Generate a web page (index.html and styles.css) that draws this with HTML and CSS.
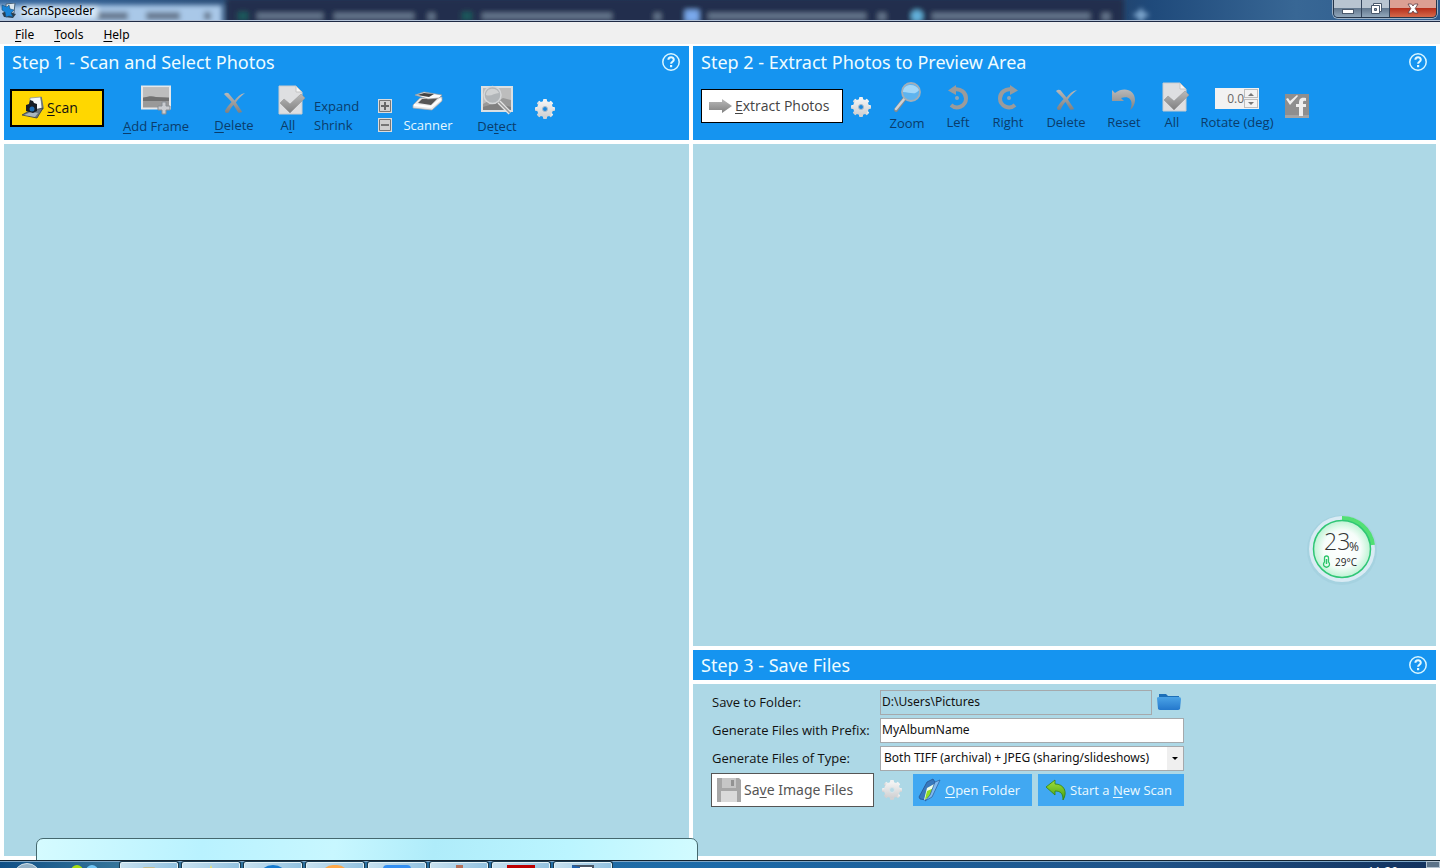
FILE: index.html
```html
<!DOCTYPE html>
<html lang="en">
<head>
<meta charset="utf-8">
<title>ScanSpeeder</title>
<link rel="stylesheet" href="styles.css">
</head>
<body>
<svg class="defs" width="0" height="0" aria-hidden="true">
  <defs>
    <linearGradient id="silver" x1="0" y1="0" x2="0" y2="1"><stop offset="0" stop-color="#f4f4f4"/><stop offset="1" stop-color="#cfd0d2"/></linearGradient>
    <linearGradient id="grey" x1="0" y1="0" x2="0" y2="1"><stop offset="0" stop-color="#b9b9b9"/><stop offset="1" stop-color="#808080"/></linearGradient>
    <linearGradient id="leaf" x1="0" y1="0" x2="0" y2="1"><stop offset="0" stop-color="#a4e03a"/><stop offset="1" stop-color="#3f9d12"/></linearGradient>
    <linearGradient id="folder" x1="0" y1="0" x2="0" y2="1"><stop offset="0" stop-color="#4ba3e6"/><stop offset="1" stop-color="#2478cc"/></linearGradient>
    <radialGradient id="dial"><stop offset="0" stop-color="#ffffff"/><stop offset=".65" stop-color="#f6fdfa"/><stop offset="1" stop-color="#bdf3d3"/></radialGradient>
    <filter id="soft" x="-20%" y="-60%" width="140%" height="220%"><feGaussianBlur stdDeviation="2.4"/></filter>
    <symbol id="gear" viewBox="0 0 22 22">
      <g fill="url(#silver)"><g id="teeth"><rect x="9" y="1" width="4" height="20" rx="1"/><rect x="1" y="9" width="20" height="4" rx="1"/></g><use href="#teeth" transform="rotate(45 11 11)"/></g>
      <path fill="url(#silver)" d="M11 3a8 8 0 1 0 0 16a8 8 0 0 0 0-16z"/>
    </symbol>
    <symbol id="help" viewBox="0 0 20 20"><circle cx="10" cy="10" r="8.2" fill="none" stroke="#d9f6ff" stroke-width="1.5"/><path d="M7.4 7.8c0-3.4 5.4-3.4 5.4 0 0 2-2.7 2-2.700 4" fill="none" stroke="#e4f9ff" stroke-width="2"/><rect x="9" y="13" width="2.2" height="2.2" fill="#e4f9ff"/></symbol>
    <symbol id="cross" viewBox="0 0 24 24"><path fill="url(#grey)" d="M1 3c3-2 5-1 6 1l5 6c3-4 6-7 11-8-4 3-7 6-9.500 10 2 3 4 6 6.500 10-3 1-4 1-5-1l-4-6.500c-2 2-4 5-5 8-2 1-4 0-4-2 2-3 4-6 7-9C7 9 4 6 1 3z"/></symbol>
    <symbol id="check" viewBox="0 0 28 30"><path fill="#dedfe1" stroke="#c9cbce" d="M1 1h17l6 6v22H1z"/><path fill="#f6f6f6" stroke="#c4c4c4" d="M18 1v6h6z"/><path fill="url(#grey)" stroke="#999" stroke-width=".6" d="M2 18l4-4 6 5L23 9l4 4-15 15z"/></symbol>
    <symbol id="turn" viewBox="0 0 24 26"><path d="M8 5.500C15 4 20 9 20 14.500A9 9 0 0 1 5 21" fill="none" stroke="#9b9b9b" stroke-width="4"/><path d="M2 6.500L10 1v10z" fill="#9b9b9b"/><circle cx="11" cy="14" r="2" fill="#8fa4b4"/></symbol>
  </defs>
</svg>

<header class="titlebar">
  <svg class="backdrop" aria-hidden="true" width="1440" height="22">
    <g filter="url(#soft)">
      <rect x="-8" y="5" width="230" height="24" fill="#a9c8e8"/>
      <rect x="226" y="-2" width="898" height="32" fill="#222d4d"/>
      <g fill="#66788f">
        <rect x="96" y="12" width="32" height="8"/><rect x="146" y="12" width="34" height="8"/><rect x="204" y="12" width="7" height="8"/>
        <rect x="257" y="13" width="66" height="6"/><rect x="334" y="13" width="80" height="6"/><rect x="428" y="13" width="7" height="7"/>
        <rect x="482" y="13" width="130" height="6"/><rect x="654" y="13" width="7" height="7"/>
        <rect x="708" y="13" width="158" height="6"/><rect x="878" y="13" width="8" height="7"/>
        <rect x="932" y="13" width="158" height="6"/><rect x="1102" y="13" width="8" height="7"/>
      </g>
      <rect x="238" y="12" width="10" height="8" fill="#1c5a5c"/><rect x="462" y="12" width="10" height="8" fill="#1c5a5c"/>
      <rect x="685" y="10" width="14" height="12" fill="#79a9ec"/><circle cx="917" cy="16" r="6" fill="#64b2dc"/>
      <path d="M1141 9v13M1134 15h14" stroke="#86afd5" stroke-width="4"/>
      <rect x="22" y="5" width="76" height="13" fill="#d5e7f7"/>
    </g>
  </svg>
  <svg class="app-icon" viewBox="0 0 16 16" width="16" height="16" aria-hidden="true"><path d="M5 1l9-1-1 10-8 1z" fill="#dbe6ee" stroke="#49637a"/><path d="M1 10l5-2 9 3-3 4-9-1z" fill="#2d3e4c"/><path d="M1 2l5 2 2-2 1 4 4 1-3 3 2 4-4-1-3 1-1-5-3-2z" fill="#1784d8" stroke="#174d79" stroke-width=".6"/></svg>
  <span class="app-name">ScanSpeeder</span>
  <div class="window-buttons">
    <button class="win" aria-label="Minimize"><svg width="14" height="14" viewBox="0 0 14 14"><rect x="1.500" y="7.500" width="11" height="4" fill="#fff" stroke="#4a596c"/></svg></button>
    <button class="win" aria-label="Restore"><svg width="14" height="14" viewBox="0 0 14 14"><path d="M4.500 1.500h8v8h-8z" fill="#fff" stroke="#4a596c"/><path d="M2.500 3.500h8v8h-8z" fill="#fff" stroke="#4a596c"/><path d="M5.500 6.500h2v2h-2z" fill="#8da0b3" stroke="#4a596c"/></svg></button>
    <button class="win win-close" aria-label="Close"><svg width="14" height="14" viewBox="0 0 14 14"><path d="M2 2h3.500L7 4l1.500-2H12L9.200 6.500 12 11H8.500L7 9l-1.500 2H2l2.800-4.500z" fill="#fff" stroke="#5b3c45" stroke-width=".8"/></svg></button>
  </div>
</header>

<nav class="menubar">
  <button class="menu"><u>F</u>ile</button>
  <button class="menu"><u>T</u>ools</button>
  <button class="menu"><u>H</u>elp</button>
</nav>

<main class="workspace">
  <section class="column">
    <div class="panel-head">
      <div class="title-row"><h2>Step 1 - Scan and Select Photos</h2><button class="help" aria-label="Help"><svg width="20" height="20"><use href="#help"/></svg></button></div>
      <div class="toolbar toolbar-scan">
        <button class="action scan"><svg width="24" height="24" viewBox="0 0 24 24" aria-hidden="true"><path d="M9 2l11-1 1 13-4 3-8-3z" fill="#f4f8fb" stroke="#8b949b" stroke-width=".8"/><path d="M20 1l2 11-5 6" fill="none" stroke="#69747c" stroke-width="1.500"/><path d="M1 19l7-4 14-3-6 10z" fill="#69747c" stroke="#38414a" stroke-width=".8"/><path d="M3 19l7-3 7 1-3 4z" fill="#aab6be"/><path d="M5 9l3-1 1-4 3 1 1 2 3 1v7l-4 2-7-2z" fill="#151c25"/><circle cx="11" cy="13" r="2.500" fill="#1e6db4"/></svg><span><u>S</u>can</span></button>
        <button class="tool w90"><svg width="32" height="32" viewBox="0 0 32 32" aria-hidden="true"><rect x="2" y="1.500" width="28" height="22" fill="#999" stroke="#e4e7ea" stroke-width="2"/><path d="M3 3h26v9H3z" fill="#bdbdbd"/><path d="M3 13c6-2 9-2 13-1l13 1v3H3z" fill="#717171"/><path d="M22 17h4v4h4v4h-4v4h-4v-4h-4v-4h4z" fill="#c9ccd0" stroke="#878d93"/></svg><span><u>A</u>dd Frame</span></button>
        <button class="tool w66"><svg class="low" width="23" height="23"><use href="#cross"/></svg><span><u>D</u>elete</span></button>
        <button class="tool w42"><svg class="nudge" width="28" height="30"><use href="#check"/></svg><span>A<u>l</u>l</span></button>
        <div class="resize">
          <span id="expand">Expand</span><button class="step" aria-labelledby="expand"><svg width="14" height="14" viewBox="0 0 14 14"><path d="M0 0h14v14H0z" fill="#dcdcdc"/><path d="M1.500 1.500h11v11h-11z" fill="#d0d0d0" stroke="#777"/><path d="M7 3v8M3 7h8" stroke="#666" stroke-width="2"/></svg></button>
          <span id="shrink">Shrink</span><button class="step" aria-labelledby="shrink"><svg width="14" height="14" viewBox="0 0 14 14"><path d="M0 0h14v14H0z" fill="#dcdcdc"/><path d="M1.500 1.500h11v11h-11z" fill="#d0d0d0" stroke="#777"/><path d="M3 7h8" stroke="#777" stroke-width="2"/></svg></button>
        </div>
        <button class="tool w72 enabled"><svg class="low" width="32" height="22" viewBox="0 0 32 22" aria-hidden="true"><path d="M1 14l7-7 22-1v4l-10 9L1 17z" fill="#e9e9e9" stroke="#a9a9a9" stroke-width=".7"/><path d="M6 12l4-4 16-1-7 7z" fill="#555"/><path d="M2 14l17 2 10-8" fill="none" stroke="#fff" stroke-width="2"/><path d="M3 4l9-3 18 3-3 3-11 1z" fill="#fbfbfb" stroke="#999" stroke-width=".7"/><path d="M5 4l7-2 10 1-5 3z" fill="#444"/></svg><span>Scanner</span></button>
        <button class="tool w66"><svg width="34" height="32" viewBox="0 0 34 32" aria-hidden="true"><rect x="2" y="2" width="30" height="24" fill="#999" stroke="#dce0e2" stroke-width="2"/><path d="M3 3h28v12l-8-2-7 4-6-2-7 4z" fill="#bdbdbd"/><path d="M3 22l13-4 15 4v3H3z" fill="#808080"/><path d="M19 17l11 11" stroke="#e5e5e5" stroke-width="4"/><path d="M19 17l11 11" stroke="#999" stroke-width="1.500"/><circle cx="12.500" cy="10" r="8.500" fill="#b1b5b8" stroke="#d5d7d9" stroke-width="1.500"/><path d="M6 10c0-8 11-8 13-2-5 0-8 4-13 2z" fill="#d0d2d3"/></svg><span>De<u>t</u>ect</span></button>
        <button class="gear gear-left" aria-label="Scan options"><svg width="22" height="22"><use href="#gear"/><circle class="hub" cx="11" cy="11" r="2.500"/></svg></button>
      </div>
    </div>
    <div class="canvas"></div>
  </section>

  <section class="column">
    <div class="panel-head">
      <div class="title-row"><h2>Step 2 - Extract Photos to Preview Area</h2><button class="help" aria-label="Help"><svg width="20" height="20"><use href="#help"/></svg></button></div>
      <div class="toolbar toolbar-extract">
        <button class="action extract"><svg width="24" height="16" viewBox="0 0 24 16" aria-hidden="true"><path d="M0 4h13V1l10 7-10 7v-3H0z" fill="url(#grey)"/></svg><span><u>E</u>xtract Photos</span></button>
        <button class="gear gear-right" aria-label="Extract options"><svg width="22" height="22"><use href="#gear"/><circle class="hub" cx="11" cy="11" r="2.500"/></svg></button>
        <button class="tool w52"><svg width="30" height="32" viewBox="0 0 30 32" aria-hidden="true"><path d="M4 28l9-12" stroke="#858b90" stroke-width="4" stroke-linecap="round"/><path d="M4 27l9-11" stroke="#ced2d5" stroke-width="2.500" stroke-linecap="round"/><circle cx="19" cy="10" r="9" fill="#5eb4ef" stroke="#a3afb8" stroke-width="1.800"/><path d="M11 10c0-9 13-9 16-2-4 6-9 2-16 2z" fill="#a3d8f9"/></svg><span>Zoom</span></button>
        <button class="tool w50"><svg class="turn" width="24" height="26"><use href="#turn"/></svg><span>Left</span></button>
        <button class="tool w50"><svg class="turn flip" width="24" height="26"><use href="#turn"/></svg><span>Right</span></button>
        <button class="tool w66"><svg class="low" width="23" height="23"><use href="#cross"/></svg><span>Delete</span></button>
        <button class="tool w50"><svg class="low" width="24" height="22" viewBox="0 0 24 22" aria-hidden="true"><path d="M0 2l3 3C12-2 23 2 23 12c0 4-2 8-5 10 4-9 0-15-9-12l3 3H0z" fill="url(#grey)"/></svg><span>Reset</span></button>
        <button class="tool w46"><svg class="nudge" width="28" height="30"><use href="#check"/></svg><span>All</span></button>
        <div class="rotate">
          <div class="spinner"><input id="rotate" type="text" value="0.0"><div class="spin-buttons"><button aria-label="Increase"><svg width="6" height="4"><path d="M0 4l3-3 3 3z"/></svg></button><button aria-label="Decrease"><svg width="6" height="4"><path d="M0 0l3 3 3-3z"/></svg></button></div></div>
          <label for="rotate">Rotate (deg)</label>
        </div>
        <button class="share" aria-label="Share to Facebook"><svg width="24" height="24" viewBox="0 0 24 24"><rect width="24" height="24" fill="#8e8e8e"/><path d="M0 21h24v3H0z" fill="#a3a3a3"/><path d="M21 4v3c-3-1-3 0-3 3h3v3h-3v9h-4v-9h-3v-3h3c0-5 1-7 7-6z" fill="#eee"/><path d="M1 5l2-1 2 3 7-6 1 1-8 9z" fill="#eee"/></svg></button>
      </div>
    </div>
    <div class="canvas preview">
      <svg class="gauge" width="76" height="76" viewBox="0 0 76 76" role="img" aria-label="Memory 23%, 29°C">
        <circle cx="38" cy="39" r="35" fill="#8fbfd0" opacity=".25"/>
        <circle cx="38" cy="38" r="33" fill="#d9ebf4"/>
        <path d="M38 7.500A30.500 30.500 0 0 1 68.500 34" fill="none" stroke="#52df75" stroke-width="5"/>
        <circle cx="38" cy="38" r="28.500" fill="url(#dial)" stroke="#2fc675" stroke-width="1.500"/>
        <text class="g-num" x="20" y="39">23</text><text class="g-pct" x="45" y="40">%</text>
        <path d="M20.500 47a2 2 0 0 1 4 0v4a3 3 0 1 1-4 0z" fill="none" stroke="#2bc569" stroke-width="1.300"/><path d="M22.500 48v5" stroke="#2bc569" stroke-width="1.500"/>
        <text class="g-temp" x="31" y="55">29°C</text>
      </svg>
    </div>
    <div class="title-row save-head"><h2>Step 3 - Save Files</h2><button class="help" aria-label="Help"><svg width="20" height="20"><use href="#help"/></svg></button></div>
    <form class="save">
      <label for="folder-path">Save to Folder:</label>
      <div class="folder-row"><input id="folder-path" class="field path" type="text" value="D:\Users\Pictures" readonly><button type="button" class="browse" aria-label="Browse"><svg width="24" height="18" viewBox="0 0 24 18"><path d="M2 1h7l2 2h11v13H2z" fill="#1d6fb8"/><path d="M0 5q0-1 2-1h20q2 0 2 2l-1 10q-1 1-2 1H3q-1 0-2-1z" fill="url(#folder)"/></svg></button></div>
      <label for="prefix">Generate Files with Prefix:</label>
      <input id="prefix" class="field" type="text" value="MyAlbumName">
      <label for="type">Generate Files of Type:</label>
      <div class="select-box"><select id="type"><option>Both TIFF (archival) + JPEG (sharing/slideshows)</option></select><svg width="16" height="23" aria-hidden="true"><rect width="16" height="23" fill="#efefef"/><path d="M5 10h6l-3 3z"/></svg></div>
      <div class="save-actions">
        <button type="button" class="action save-files"><svg width="24" height="24" viewBox="0 0 24 24" aria-hidden="true"><path d="M0 0h22l2 2v22H0z" fill="#a6a6a6"/><path d="M5 0h14v10H5z" fill="#c6c6c6"/><path d="M14 2h3v6h-3z" fill="#929292"/><path d="M4 13h16v11H4z" fill="#dadada"/></svg><span>Sa<u>v</u>e Image Files</span></button>
        <button type="button" class="gear gear-save" aria-label="Save options"><svg width="22" height="22"><use href="#gear"/><circle class="hub" cx="11" cy="11" r="2.500"/></svg></button>
        <button type="button" class="link-button open"><svg width="24" height="24" viewBox="0 0 24 24" aria-hidden="true"><path d="M1 19L9 4l6-3 2 3-9 18-6-1z" fill="#3978bd" stroke="#244d87" stroke-width=".7"/><path d="M9 10l9-5-5 14-7 3z" fill="#f2ffe8"/><path d="M9 13l7-3-3 9-6 2z" fill="#8fdc25"/><path d="M17 4l5-2-8 17-7 4 5-6z" fill="#7fb8ef" stroke="#285c9a" stroke-width=".7"/></svg><span><u>O</u>pen Folder</span></button>
        <button type="button" class="link-button new-scan"><svg width="22" height="22" viewBox="0 0 22 22" aria-hidden="true"><path d="M1 8l9-7v4c9 0 13 8 8 16 0-6-2-9-8-9v4z" fill="url(#leaf)" stroke="#34820f" stroke-width=".8"/></svg><span>Start a <u>N</u>ew Scan</span></button>
      </div>
    </form>
  </section>
</main>

<div class="glass"></div>
<footer class="taskbar">
  <div class="start"></div>
  <div class="quick"><i class="q-green"></i><i class="q-blue"></i></div>
  <div class="task"><i class="t-tan"></i></div><div class="task"><i class="t-star"></i></div><div class="task"><i class="t-blue"></i></div><div class="task"><i class="t-orange"></i></div><div class="task"><i class="t-sky"></i></div><div class="task"><i class="t-pen"></i></div><div class="task"><i class="t-red"></i></div><div class="task"><i class="t-white"></i></div>
  <div class="clock">11:29</div>
  <div class="show-desktop"></div>
</footer>
</body>
</html>
```

FILE: styles.css
```css
* { box-sizing: border-box; }
html, body { height: 100%; }
body {
  margin: 0;
  display: flex;
  flex-direction: column;
  overflow: hidden;
  position: relative;
  background: #fff;
  color: #111;
  font: 13px/18px "Open Sans", "Noto Sans", sans-serif;
}
button { margin: 0; padding: 0; border: 0; background: none; color: inherit; font: inherit; }
input, select { font: inherit; color: inherit; }
svg { display: block; flex: none; }
u { text-underline-offset: 2px; }
.defs { position: absolute; }

.titlebar {
  position: relative;
  display: flex;
  flex: none;
  height: 22px;
  padding-left: 1px;
  overflow: hidden;
  border-bottom: 1px solid #1f2a44;
  background: linear-gradient(90deg, #34679f 0, #28466c 20%, #253f61 75%, #1f4a7b 80%, #386795 90%, #2c5a8d);
}
.titlebar::after { content: ""; position: absolute; left: 0; right: 0; bottom: 0; height: 1px; background: #b5c4d8; }
.backdrop { position: absolute; inset: 0; }
.app-icon { position: relative; margin-top: 3px; }
.app-name { position: relative; margin: 2px 0 0 4px; color: #000; font-family: "Noto Sans", sans-serif; font-size: 12px; }
.window-buttons {
  position: relative;
  display: flex;
  height: 18px;
  margin: 0 3px 0 auto;
  border: 1px solid #26364a;
  border-top: 0;
  border-radius: 0 0 5px 5px;
  overflow: hidden;
  box-shadow: 0 0 0 1px #9db1c6;
}
.win {
  display: grid;
  place-items: center;
  width: 28px;
  border-right: 1px solid #33445b;
  background: linear-gradient(#b9c5d1 0 45%, #64798f 50%, #92a7bb);
}
.win-close { width: 46px; border: 0; background: linear-gradient(#dc9f93 0 45%, #b8301c 50%, #d5694b); }

.menubar { display: flex; flex: none; gap: 20px; height: 22px; padding: 3px 15px 0; background: #f0f0f0; color: #000; }
.menu { height: 19px; font-family: "Noto Sans", sans-serif; line-height: 18px; font-size: 12px; }

.workspace {
  flex: 1;
  min-height: 0;
  display: grid;
  grid-template-columns: 685fr 743fr;
  gap: 4px;
  padding: 2px 4px 4px;
}
.column { display: flex; flex-direction: column; gap: 4px; min-width: 0; }
.panel-head { flex: none; height: 94px; background: #1594f0; }
.title-row { display: flex; align-items: center; justify-content: space-between; height: 31px; padding: 0 8px; color: #eefcff; }
.title-row h2 { margin: 0; font: 400 18px/24px "Noto Sans", sans-serif; }
.save-head { flex: none; height: 30px; background: #1594f0; }
.canvas { flex: 1; min-height: 0; background: #add8e6; }

.toolbar { display: flex; align-items: flex-start; color: #0a3c6b; }
.toolbar-scan { padding: 8px 6px 0; }
.toolbar-extract { padding: 5px 8px 0; }
.tool { display: flex; flex: none; flex-direction: column; align-items: center; height: 49px; white-space: nowrap; }
.tool span { margin-top: auto; }
.enabled { color: #e6f8ff; }
.low { margin-top: 6px; }
.nudge { margin-left: 8px; }
.turn { margin-top: 2px; }
.flip { transform: scaleX(-1); }
.w42 { width: 42px; }
.w46 { width: 46px; }
.w50 { width: 50px; }
.w52 { width: 52px; }
.w66 { width: 66px; }
.w72 { width: 72px; }
.w90 { width: 90px; }

.action { display: flex; flex: none; align-items: center; gap: 2px; font-size: 14px; white-space: nowrap; }
.scan { width: 94px; height: 38px; margin: 4px 7px 0 0; padding-left: 9px; gap: 2px; border: 2px solid #000; background: #ffd700; color: #111; }
.extract { width: 142px; height: 34px; margin-top: 7px; padding-left: 7px; border: 1px solid #000; background: #fff; color: #444; }

.resize { display: grid; grid-template-columns: 64px 14px; row-gap: 1px; align-items: center; margin: 12px 0 0 5px; }
.gear .hub { fill: #1c8ae0; stroke: #aebdca; }
.gear-left { margin: 13px 0 0 4px; }
.gear-right { margin: 14px 9px 0 7px; }
.rotate { display: flex; flex-direction: column; align-items: center; justify-content: space-between; width: 84px; height: 49px; padding-top: 6px; white-space: nowrap; }
.spinner { display: flex; width: 44px; height: 21px; padding: 1px; background: #f2f2f2; }
.spinner input { width: 28px; padding: 0; border: 0; background: none; color: #666; font-size: 12px; text-align: right; }
.spin-buttons { display: grid; flex: 1; gap: 1px; }
.spin-buttons button { display: grid; place-items: center; border: 1px solid #bdbdbd; background: #f3f3f3; }
.spin-buttons path { fill: #777; }
.share { margin: 12px 0 0 6px; }

.preview { position: relative; }
.gauge { position: absolute; right: 56px; bottom: 59px; }
.g-num { font: 300 23px "Open Sans", sans-serif; fill: #333; }
.g-pct { font: 12px "Open Sans", sans-serif; fill: #333; }
.g-temp { font: 10px "Open Sans", sans-serif; fill: #222; }

.save {
  flex: none;
  display: grid;
  grid-template-columns: 168px 304px;
  grid-template-rows: 26px 26px 26px 34px;
  row-gap: 2px;
  align-items: center;
  align-content: start;
  height: 172px;
  padding: 5px 19px 0;
  background: #add8e6;
  color: #111;
}
.save label { white-space: nowrap; }
.folder-row { display: flex; align-items: center; gap: 5px; }
.field { width: 100%; height: 25px; padding: 0 1px 2px; border: 1px solid #a5a9ac; background: #fff; font-family: "Noto Sans", sans-serif; font-size: 12px; }
.path { width: 272px; background: #add8e6; }
.select-box { display: flex; height: 25px; border: 1px solid #a5a9ac; background: #fff; }
.select-box select { flex: 1; min-width: 0; padding: 0 3px; border: 0; background: none; appearance: none; font-family: "Noto Sans", sans-serif; font-size: 12px; }
.save-actions { display: flex; align-items: center; grid-column: 1 / -1; margin-left: -1px; }
.save-files { width: 163px; height: 34px; padding-left: 5px; gap: 3px; border: 1px solid #555; background: #fff; color: #555; font-family: "Noto Sans", sans-serif; }
.gear-save { margin: 0 10px 0 7px; }
.gear-save .hub { fill: #b7dbe7; stroke: #dde5e9; }
.link-button { display: flex; align-items: center; gap: 3px; height: 32px; padding-left: 5px; background: #41a8f2; color: #ecfaff; white-space: nowrap; }
.open { width: 119px; margin-right: 6px; }
.new-scan { width: 146px; padding-left: 7px; }

.glass {
  position: absolute;
  left: 36px;
  bottom: 0;
  width: 662px;
  height: 30px;
  border: 1px solid #45686e;
  border-radius: 7px 7px 0 0;
  background: linear-gradient(100deg, #d5fbff, #b9f2ff 25%, #c8f7ff 45%, #afecfa 60%, #bbf5ff 80%, #d2fbff);
}
.taskbar {
  position: relative;
  display: flex;
  flex: none;
  height: 8px;
  overflow: hidden;
  border-top: 1px solid #14232f;
  box-shadow: inset 0 1px #7da5c6;
  background: linear-gradient(90deg, #0f4f86, #347399 8%, #1c6aa8 50%, #1f5287 80%, #12315d);
}
.start { width: 28px; height: 28px; margin: 2px 16px 0 13px; border-radius: 50%; background: #93b1c6; border: 1px solid #d3e3ec; }
.quick { display: flex; gap: 3px; width: 62px; padding: 4px 0 0 14px; }
.quick i { width: 12px; height: 12px; border-radius: 50%; }
.q-green { background: #a8df11; }
.q-blue { background: #71c5f5; }
.task { display: flex; justify-content: center; width: 60px; height: 12px; margin-right: 2px; border: 1px solid #17384e; border-bottom: 0; border-radius: 3px 3px 0 0; background: linear-gradient(110deg, #c9e2f0, #8fc0df); box-shadow: inset 0 0 0 1px #e2f2f8; }
.task i { flex: none; margin-top: 3px; width: 28px; height: 24px; }
.task .t-tan { border-radius: 3px; background: #c7bd8d; width: 14px; margin-top: 5px; }
.t-star { clip-path: polygon(50% 0, 65% 50%, 35% 50%); background: #f3e65d; }
.t-blue { border-radius: 50%; background: #167bd0; }
.t-orange { border-radius: 12px; background: #ffa848; }
.t-sky { border-radius: 4px; background: #3490f2; }
.task .t-pen { width: 7px; background: #b56f58; }
.t-red { background: #bd0000; width: 32px; }
.task .t-white { border: 2px solid #4a5664; border-left: 8px solid #1f61ad; background: #fff; width: 22px; }
.clock { margin: 4px 28px 0 auto; color: #fff; font-size: 12px; line-height: 14px; }
.show-desktop { width: 14px; border: 1px solid #b2c2d0; background: #5c7389; }
```
